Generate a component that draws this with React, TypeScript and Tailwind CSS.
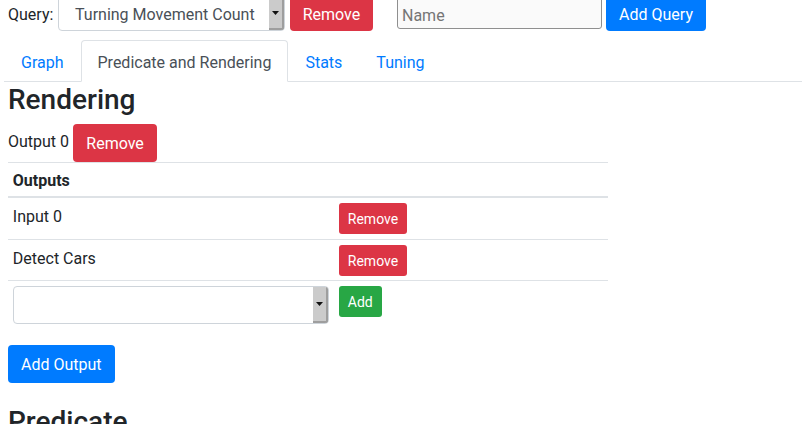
import React from 'react';

function FakeSelect({ text, className }: { text?: string; className: string }) {
  return (
    <div className={`flex border border-[#ced4da] rounded-[4px] bg-white overflow-hidden ${className}`}>
      <div className="flex-1 pl-[16px] pt-[6px] pb-[3px] leading-6 text-[#495057] whitespace-nowrap">{text ?? '\u00a0'}</div>
      <div className="w-[15px] self-stretch bg-[#cbcbcb] border-r-2 border-b-2 border-[#9e9e9e] flex items-center justify-center">
        <svg width="7" height="4" viewBox="0 0 7 4">
          <polygon points="0,0 7,0 3.5,4" fill="#111" />
        </svg>
      </div>
    </div>
  );
}

function Btn({ color, children, className = '' }: { color: string; children: React.ReactNode; className?: string }) {
  return (
    <button className={`${color} text-white rounded-[4px] border border-transparent leading-6 ${className}`}>
      {children}
    </button>
  );
}

export default function App() {
  const tabs = ['Graph', 'Predicate and Rendering', 'Stats', 'Tuning'];
  const active = 'Predicate and Rendering';
  const rows = ['Input 0', 'Detect Cars'];

  return (
    <div className="font-['Roboto',sans-serif] text-[16px] text-[#212529] bg-white w-[802px] h-[424px] overflow-hidden">
      {/* query bar */}
      <div className="flex items-start -mt-[4px] pl-2">
        <div className="w-[50px] pt-[7px] leading-6">Query:</div>
        <FakeSelect text="Turning Movement Count" className="w-[227px]" />
        <Btn color="bg-[#dc3545]" className="ml-[5px] w-[83px] pt-[6px] pb-[3px]">Remove</Btn>
        <input
          placeholder="Name"
          className="ml-[24px] w-[205px] h-[33px] border border-[#8f8f8f] rounded-[3px] bg-[#fafafa] pl-[4px] pt-[6px] pb-[1px] leading-6 placeholder:text-[#757575] outline-none"
        />
        <Btn color="bg-[#007bff]" className="ml-[4px] w-[100px] pt-[6px] pb-[3px]">Add Query</Btn>
      </div>

      {/* tabs */}
      <div className="mt-[9px] ml-[4px] flex border-b border-[#dee2e6]">
        {tabs.map((t) => (
          <div
            key={t}
            className={
              t === active
                ? 'px-4 pt-[10px] pb-[6px] leading-6 border border-[#dee2e6] border-b-white rounded-t-[4px] -mb-px text-[#495057] bg-white'
                : 'px-4 pt-[10px] pb-[6px] leading-6 border border-transparent -mb-px text-[#007bff]'
            }
          >
            {t}
          </div>
        ))}
      </div>

      {/* content */}
      <div className="pl-2">
        <h3 className="mt-[1px] text-[28px] font-medium leading-[1.2] mb-[7px]">Rendering</h3>
        <div className="flex items-start">
          <span className="mt-[6px] leading-6 mr-[4px]">Output 0</span>
          <Btn color="bg-[#dc3545]" className="w-[84px] pt-[7px] pb-[5px]">Remove</Btn>
        </div>

        <div className="w-[600px] border-t border-[#dee2e6]">
          <div className="px-[4.8px] pt-[6.8px] pb-[2.8px] font-bold leading-6 border-b-2 border-[#dee2e6]">Outputs</div>
          {rows.map((r) => (
            <div key={r} className="flex border-b border-[#dee2e6]">
              <div className="w-[326px] px-[4.8px] pt-[6.8px] leading-6">{r}</div>
              <div className="flex-1 p-[4.8px]">
                <button className="bg-[#dc3545] text-white text-[14px] leading-[21px] px-2 pt-[5px] pb-[3px] rounded-[3px] border border-transparent">
                  Remove
                </button>
              </div>
            </div>
          ))}
          <div className="flex">
            <div className="w-[326px] p-[4.8px]">
              <FakeSelect className="w-[316px] h-[38px]" />
            </div>
            <div className="flex-1 p-[4.8px]">
              <button className="bg-[#28a745] text-white text-[14px] leading-[21px] px-2 pt-[5px] pb-[3px] rounded-[3px] border border-transparent">
                Add
              </button>
            </div>
          </div>
        </div>

        <Btn color="bg-[#007bff]" className="mt-4 px-3 pt-[7px] pb-[5px]">Add Output</Btn>

        <h3 className="mt-[22px] text-[28px] font-medium leading-[1.2]">Predicate</h3>
      </div>
    </div>
  );
}
